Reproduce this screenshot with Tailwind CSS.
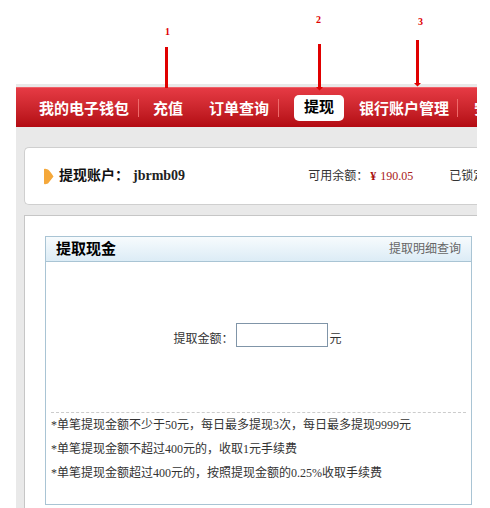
<!DOCTYPE html>
<html lang="zh">
<head>
<meta charset="utf-8">
<script src="https://cdn.jsdelivr.net/npm/@tailwindcss/browser@4"></script>
</head>
<body class="bg-white">
<div class="relative w-[490px] h-[508px] overflow-hidden bg-white pl-4 pr-[13px] pt-[84px] font-['Liberation_Serif','Noto_Sans_CJK_SC',serif] text-xs text-[#333]">
  <!-- annotations -->
  <span class="absolute left-[165px] top-[26px] text-[10px] leading-[11px] font-bold text-[#e00000]">1</span>
  <div class="absolute left-[165px] top-[47px] w-[3px] h-[41px] bg-[#e00000]"></div>
  <span class="absolute left-[316px] top-[14px] text-[10px] leading-[11px] font-bold text-[#e00000]">2</span>
  <svg class="absolute left-[316px] top-[44px]" width="7" height="47" viewBox="0 0 7 47"><path d="M2 0h3v43l2 0-3.500 3.500L0 43l2 0z" fill="#e00000"/></svg>
  <span class="absolute left-[418px] top-[16px] text-[10px] leading-[11px] font-bold text-[#e00000]">3</span>
  <svg class="absolute left-[414px] top-[40px]" width="7" height="47" viewBox="0 0 7 47"><path d="M2 0h3v43l2 0-3.500 3.500L0 43l2 0z" fill="#e00000"/></svg>

  <div class="h-[424px] bg-[#e9e9e9] overflow-hidden">
    <nav class="mt-[3px] h-10 flex items-center whitespace-nowrap overflow-hidden border-t border-[#ee6068] bg-gradient-to-b from-[#e63a44] to-[#b30a12] pl-[23px] text-[15px] leading-5 font-bold text-white font-['Noto_Sans_CJK_SC',sans-serif]">
      <a class="w-[89px] shrink-0">我的电子钱包</a>
      <i class="ml-[10px] w-px h-[18px] shrink-0 bg-[#ef6a6a]"></i>
      <a class="ml-[14px] w-[31px] shrink-0">充值</a>
      <a class="ml-[25px] w-[59px] shrink-0">订单查询</a>
      <i class="ml-[10px] w-px h-[18px] shrink-0 bg-[#ef6a6a]"></i>
      <a class="ml-[15px] mt-px w-[50px] h-[26px] shrink-0 rounded-[5px] bg-white text-black text-center leading-[22px]">提现</a>
      <a class="ml-[15px] w-[89px] shrink-0">银行账户管理</a>
      <i class="ml-[9px] w-px h-[18px] shrink-0 bg-[#ef6a6a]"></i>
      <a class="ml-[16px] shrink-0">安全</a>
    </nav>

    <section class="mt-5 ml-2 -mr-1 h-[58px] flex items-center whitespace-nowrap overflow-hidden rounded-l-[5px] border-t border-b border-l border-[#cfcfcf] bg-white">
      <svg class="ml-[18px] shrink-0" width="11" height="17" viewBox="0 0 11 17"><path d="M1 1.5 Q1 .5 2.2 .8 L5 1.5 Q7 3 10.5 8.5 Q7 13 5 15.5 L2.2 16.3 Q1 16.5 1 15.5 Z" fill="#f5a83a"/></svg>
      <strong class="ml-[5px] text-sm leading-5 text-[#111] font-bold">提现账户：</strong>
      <strong class="ml-[4px] text-sm leading-5 text-[#222] font-bold">jbrmb09</strong>
      <span class="ml-[123px] text-xs text-[#333]">可用余额：<b class="ml-0.5 text-[#a80f0f]">¥</b><span class="ml-[4px] text-[#a82020]">190.05</span></span>
      <span class="ml-[36px] text-xs text-[#333]">已锁定金额</span>
    </section>

    <section class="mt-[10px] ml-2 h-[300px] border-t border-l border-[#c6c6c6] bg-white pt-5 pl-5 pr-[5px]">
      <div class="w-[427px] h-[269px] border border-[#a9c4d4] flex flex-col">
        <header class="h-[25px] shrink-0 flex items-center justify-between border-b border-[#a9c4d4] bg-gradient-to-b from-[#f7fbfd] to-[#dcecf6] pl-[10px] pr-[10px]">
          <strong class="text-[15px] leading-5 font-bold text-black">提取现金</strong>
          <a class="text-xs text-[#666]">提取明细查询</a>
        </header>
        <div class="h-[150px] shrink-0 flex items-center justify-center pb-1 pr-0.5">
          <label class="mt-2 text-xs text-[#333]">提取金额：</label>
          <div class="ml-0.5 w-[92px] h-6 border border-[#8095a8] bg-white"></div>
          <span class="ml-0.5 mt-2 text-xs text-[#333]">元</span>
        </div>
        <div class="mx-[5px] border-t border-dashed border-[#cccccc] text-xs leading-6 text-[#333]">
          <p>*单笔提现金额不少于50元，每日最多提现3次，每日最多提现9999元</p>
          <p>*单笔提现金额不超过400元的，收取1元手续费</p>
          <p>*单笔提现金额超过400元的，按照提现金额的0.25%收取手续费</p>
        </div>
      </div>
    </section>
  </div>
</div>
</body>
</html>
